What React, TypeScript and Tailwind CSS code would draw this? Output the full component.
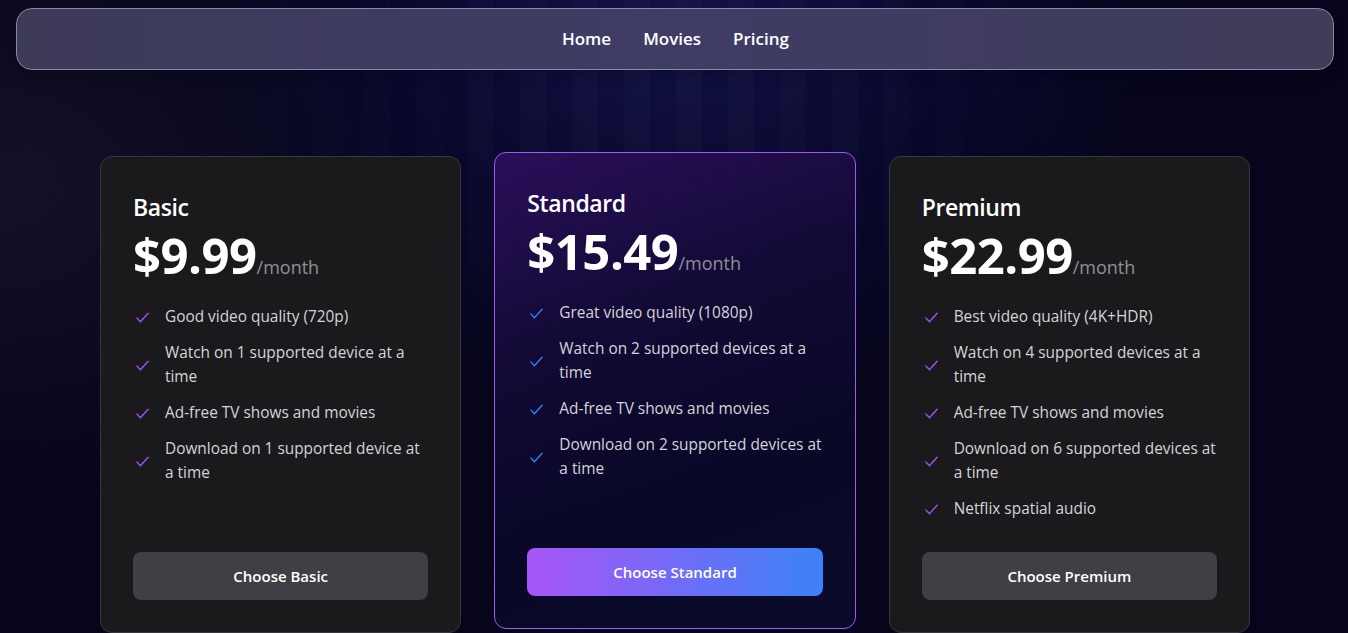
import React from "react";

type Plan = {
  name: string;
  price: string;
  features: string[];
  featured?: boolean;
};

const plans: Plan[] = [
  {
    name: "Basic",
    price: "$9.99",
    features: [
      "Good video quality (720p)",
      "Watch on 1 supported device at a time",
      "Ad-free TV shows and movies",
      "Download on 1 supported device at a time",
    ],
  },
  {
    name: "Standard",
    price: "$15.49",
    featured: true,
    features: [
      "Great video quality (1080p)",
      "Watch on 2 supported devices at a time",
      "Ad-free TV shows and movies",
      "Download on 2 supported devices at a time",
    ],
  },
  {
    name: "Premium",
    price: "$22.99",
    features: [
      "Best video quality (4K+HDR)",
      "Watch on 4 supported devices at a time",
      "Ad-free TV shows and movies",
      "Download on 6 supported devices at a time",
      "Netflix spatial audio",
    ],
  },
];

function Check({ color }: { color: string }) {
  return (
    <svg viewBox="0 0 24 24" className="w-[17px] h-[17px] shrink-0" fill="none" stroke={color} strokeWidth={1.8} strokeLinecap="round" strokeLinejoin="round">
      <path d="M4 12.5l5 5.5L20 6" />
    </svg>
  );
}

function Card({ plan }: { plan: Plan }) {
  const f = plan.featured;
  return (
    <div
      className={
        "flex flex-col rounded-xl border px-8 pt-[34px] pb-8 " +
        (f
          ? "-translate-y-1 border-[#9d5cf0] bg-[linear-gradient(160deg,#2a0f5a_0%,#120a35_35%,#080826_70%,#0a0a2c_100%)]"
          : "border-[#36363c] bg-[#1a1a1c]")
      }
    >
      <h3 className="text-[23px] leading-8 font-semibold tracking-[-0.4px] text-white">{plan.name}</h3>
      <div className="mt-2 flex items-baseline">
        <span className="text-[49px] leading-[48px] font-bold text-white tracking-[-0.5px]">{plan.price}</span>
        <span className="text-[18px] text-[#8f8f96]">/month</span>
      </div>
      <ul className="mt-6 flex flex-col gap-3">
        {plan.features.map((t) => (
          <li key={t} className="flex items-center gap-[14px] pl-[1px] text-[15.4px] leading-6 text-[#d4d4d8]">
            <Check color={f ? "#3b82f6" : "#a855f7"} />
            <span>{t}</span>
          </li>
        ))}
      </ul>
      <div className="flex-1" />
      <button
        className={
          "mt-[31px] h-12 w-full rounded-lg text-[15px] font-semibold text-white " +
          (f ? "bg-[linear-gradient(90deg,#a855f7,#3b82f6)]" : "bg-[#3f3f46]")
        }
      >
        Choose {plan.name}
      </button>
    </div>
  );
}

export default function App() {
  return (
    <div className="relative h-[633px] overflow-hidden bg-[#06051c] font-['Open_Sans',sans-serif]">
      <div className="pointer-events-none absolute inset-0 bg-[radial-gradient(ellipse_45%_80%_at_50%_0%,#121248_0%,#0a0930_40%,transparent_80%)]" />
      <div className="pointer-events-none absolute inset-0 bg-[repeating-linear-gradient(90deg,rgba(255,255,255,0.022)_0px,rgba(255,255,255,0.022)_26px,transparent_26px,transparent_52px)] [mask-image:radial-gradient(ellipse_40%_70%_at_50%_10%,black,transparent)]" />
      <div className="pointer-events-none absolute inset-0 bg-[radial-gradient(ellipse_30%_50%_at_0%_30%,rgba(40,40,60,0.35),transparent)]" />
      <div className="relative">
        <nav className="ml-4 mr-[14px] mt-2 flex h-[62px] items-center justify-center gap-8 rounded-2xl border border-[#8a88a8] bg-[linear-gradient(90deg,#3d3b58_0%,#3f3c66_50%,#3f3d58_100%)] pl-[1px] shadow-lg">
          <a className="text-[17px] font-semibold text-white">Home</a>
          <a className="text-[17px] font-semibold text-white">Movies</a>
          <a className="text-[17px] font-semibold text-white">Pricing</a>
        </nav>
        <main className="ml-[100px] mt-[86px] grid w-[1150px] grid-cols-3 gap-[33px]">
          {plans.map((p) => (
            <Card key={p.name} plan={p} />
          ))}
        </main>
      </div>
    </div>
  );
}
